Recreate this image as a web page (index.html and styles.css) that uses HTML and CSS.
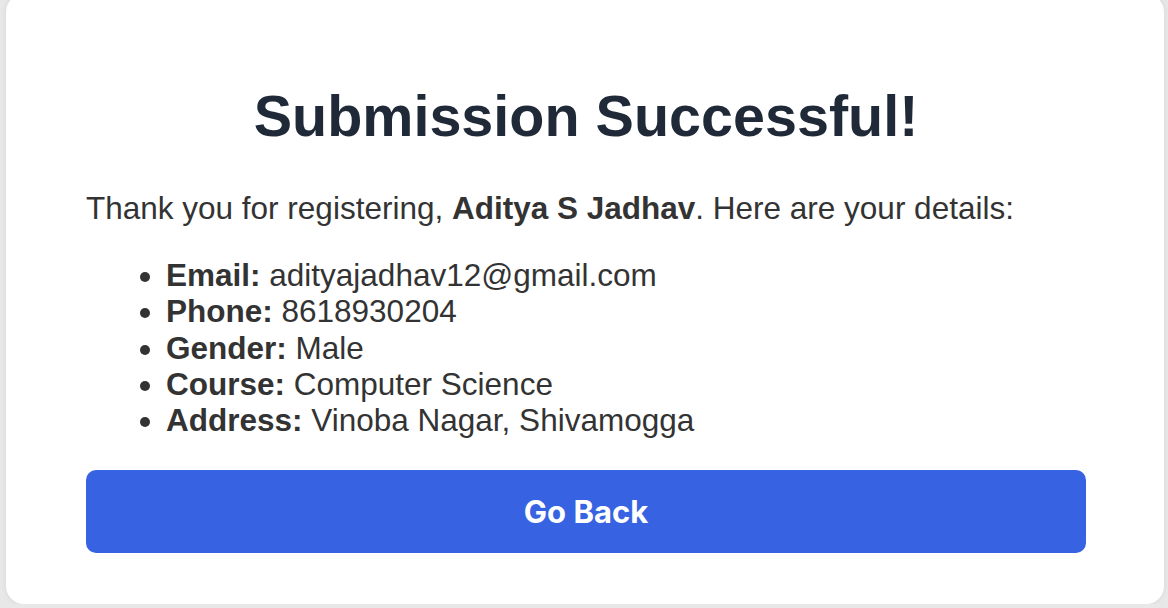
FILE: index.html
```html
<!DOCTYPE html>
<html lang="en">
<head>
<meta charset="utf-8">
<title>Submission Successful</title>
<link rel="stylesheet" href="styles.css">
</head>
<body>
<main class="card">
  <h1 class="title">Submission Successful!</h1>
  <p class="intro">Thank you for registering, <strong>Aditya S Jadhav</strong>. Here are your details:</p>
  <ul class="details">
    <li><strong>Email:</strong> adityajadhav12@gmail.com</li>
    <li><strong>Phone:</strong> 8618930204</li>
    <li><strong>Gender:</strong> Male</li>
    <li><strong>Course:</strong> Computer Science</li>
    <li><strong>Address:</strong> Vinoba Nagar, Shivamogga</li>
  </ul>
  <button class="back-btn" type="button">Go Back</button>
</main>
</body>
</html>
```

FILE: styles.css
```css
html, body {
  margin: 0;
  padding: 0;
}

body {
  background: #e8e8e8;
  font-family: "Liberation Sans", Arial, sans-serif;
  color: #333333;
  overflow: hidden;
}

.card {
  box-sizing: border-box;
  width: 1158px;
  height: 610px;
  margin: -6px 0 0 6px;
  padding: 89px 78px 0 80px;
  background: #ffffff;
  border-radius: 18px;
  box-shadow: 0 0 6px rgba(0, 0, 0, 0.08);
  display: flex;
  flex-direction: column;
}

.title {
  margin: 0 0 41px;
  font-size: 57.5px;
  font-weight: 700;
  color: #1f2937;
  text-align: center;
}

.intro {
  margin: 0 0 31px;
  font-size: 31.5px;
  line-height: 36px;
}

.details {
  margin: 0 0 32px;
  padding-left: 80px;
  font-size: 31.5px;
  line-height: 36.25px;
}

.back-btn {
  display: block;
  width: 1000px;
  height: 83px;
  padding: 0;
  border: none;
  border-radius: 10px;
  background: #3763e3;
  color: #ffffff;
  font-family: Inter, "Noto Sans", sans-serif;
  font-size: 31px;
  font-weight: 700;
  cursor: pointer;
}
```
